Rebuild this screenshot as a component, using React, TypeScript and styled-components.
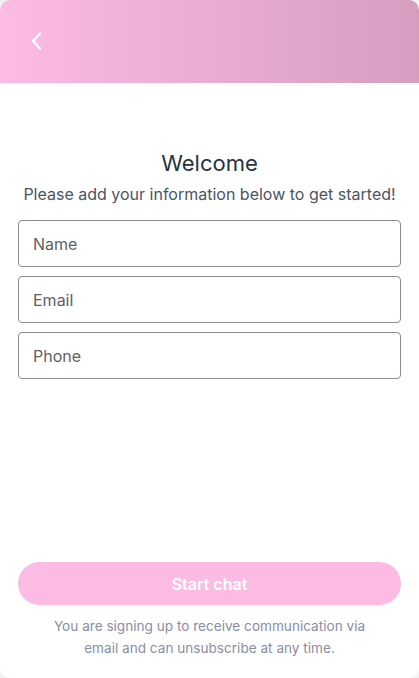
import React from "react";
import styled, { createGlobalStyle } from "styled-components";

const GlobalStyle = createGlobalStyle`
  html, body {
    margin: 0;
    padding: 0;
    background: #f2f2f2;
    font-family: Inter, "Noto Sans", sans-serif;
  }
  * {
    box-sizing: border-box;
  }
`;

const Widget = styled.div`
  width: 419px;
  height: 678px;
  display: flex;
  flex-direction: column;
  background: #ffffff;
  border-radius: 10px;
  overflow: hidden;
`;

const Header = styled.div`
  height: 83px;
  flex-shrink: 0;
  display: flex;
  align-items: center;
  padding-left: 26px;
  padding-bottom: 2px;
  background: linear-gradient(90deg, #fcbbe3 0%, #d59ebf 100%);
`;

const BackButton = styled.button`
  width: 22px;
  height: 26px;
  padding: 0;
  border: none;
  background: transparent;
  display: flex;
  align-items: center;
  justify-content: center;
  cursor: pointer;
`;

const Body = styled.div`
  flex: 1;
  display: flex;
  flex-direction: column;
  padding: 66px 18px 19px;
`;

const Title = styled.h1`
  margin: 0;
  font-size: 22px;
  line-height: 28px;
  font-weight: 400;
  color: #263341;
  text-align: center;
`;

const Subtitle = styled.p`
  margin: 7px 0 16px;
  font-size: 16px;
  line-height: 20px;
  color: #4b5563;
  text-align: center;
  white-space: nowrap;
`;

const Fields = styled.div`
  display: flex;
  flex-direction: column;
  gap: 9px;
`;

const Field = styled.input`
  width: 100%;
  height: 47px;
  padding: 0 14px;
  border: 1px solid #8c8c8c;
  border-radius: 4px;
  font-family: inherit;
  font-size: 16px;
  color: #333;
  outline: none;
  &::placeholder {
    color: #5f5f66;
  }
`;

const Footer = styled.div`
  margin-top: auto;
  display: flex;
  flex-direction: column;
  align-items: center;
`;

const StartButton = styled.button`
  width: 100%;
  height: 43px;
  border: none;
  border-radius: 22px;
  background: #fcbbe3;
  color: #ffffff;
  font-family: inherit;
  font-size: 16px;
  font-weight: 600;
  cursor: pointer;
`;

const Notice = styled.p`
  margin: 10px 0 0;
  width: 320px;
  font-size: 13.6px;
  line-height: 22px;
  color: #8a8ea3;
  text-align: center;
`;

export default function App() {
  return (
    <>
      <GlobalStyle />
      <Widget>
        <Header>
          <BackButton aria-label="Back">
            <svg width="14" height="20" viewBox="0 0 14 20" fill="none">
              <path
                d="M10 2.5 L3 10 L10 17.5"
                stroke="#ffffff"
                strokeWidth="2.4"
                strokeLinecap="round"
                strokeLinejoin="round"
              />
            </svg>
          </BackButton>
        </Header>
        <Body>
          <Title>Welcome</Title>
          <Subtitle>Please add your information below to get started!</Subtitle>
          <Fields>
            <Field placeholder="Name" />
            <Field placeholder="Email" />
            <Field placeholder="Phone" />
          </Fields>
          <Footer>
            <StartButton>Start chat</StartButton>
            <Notice>
              You are signing up to receive communication via email and can
              unsubscribe at any time.
            </Notice>
          </Footer>
        </Body>
      </Widget>
    </>
  );
}
